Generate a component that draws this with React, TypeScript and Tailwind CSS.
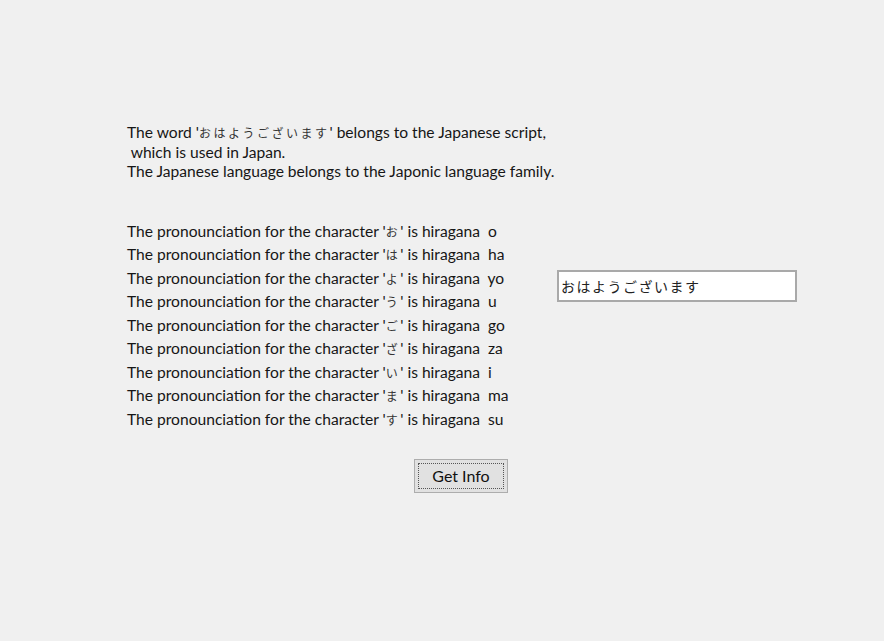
import React from "react";

const rows: [string, string][] = [
  ["お", "o"],
  ["は", "ha"],
  ["よ", "yo"],
  ["う", "u"],
  ["ご", "go"],
  ["ざ", "za"],
  ["い", "i"],
  ["ま", "ma"],
  ["す", "su"],
];

function Jp({ children }: { children: React.ReactNode }) {
  return (
    <span className="font-['Noto_Sans_CJK_JP',sans-serif] text-[12px] leading-none tracking-[2.5px] text-[#333]">
      {children}
    </span>
  );
}

export default function App() {
  return (
    <div className="w-[884px] h-[641px] bg-[#f0f0f0] text-[#161616] font-['Lato','Noto_Sans_CJK_JP',sans-serif] text-[15.6px] overflow-hidden">
      <div className="flex flex-row items-start pt-[123px] pl-[127px]">
        <div className="flex flex-col whitespace-pre">
          <div className="flex flex-col leading-[19.5px]">
            <div>
              The word '<Jp>おはようございます</Jp>' belongs to the Japanese script,
            </div>
            <div> which is used in Japan.</div>
            <div>The Japanese language belongs to the Japonic language family.</div>
          </div>
          <div className="flex flex-col mt-[38px] leading-[23.5px]">
            {rows.map(([k, r]) => (
              <div key={k}>
                The pronounciation for the character '<Jp>{k}</Jp>' is hiragana  {r}
              </div>
            ))}
          </div>
        </div>
        <div className="ml-auto mr-[87px] mt-[147px]">
          <div className="w-[240px] h-[32px] bg-white border-2 border-[#a9a9a9] flex items-center px-[2px]">
            <span className="font-['Noto_Sans_CJK_JP',sans-serif] text-[14px] tracking-[1.5px] text-[#222]">
              おはようございます
            </span>
          </div>
        </div>
      </div>
      <div className="flex justify-center pl-[38px] mt-[28px]">
        <button className="w-[94px] h-[34px] bg-[#e1e1e1] border border-[#adadad] p-[3px]">
          <div className="w-full h-full border border-dotted border-[#555] flex items-center justify-center text-[16px] text-[#111]">
            Get Info
          </div>
        </button>
      </div>
    </div>
  );
}
